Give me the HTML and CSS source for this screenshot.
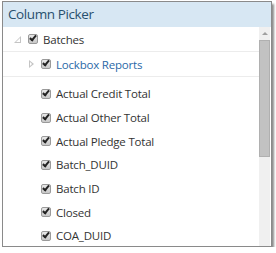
FILE: index.html
```
<!DOCTYPE html>
<html lang="en">
<head>
    <meta charset="UTF-8">
    <title>Column Picker</title>
    <link rel="stylesheet" href="styles.css">
</head>
<body>
    <div class="picker">
        <div class="picker-title">Column Picker</div>
        <div class="picker-body">
            <ul class="tree">
                <li class="node root">
                    <span class="toggle open"></span>
                    <span class="check"></span>
                    <span class="label">Batches</span>
                </li>
                <li class="node group">
                    <span class="toggle closed"></span>
                    <span class="check"></span>
                    <span class="label link">Lockbox Reports</span>
                </li>
                <li class="node leaf"><span class="check"></span><span class="label">Actual Credit Total</span></li>
                <li class="node leaf"><span class="check"></span><span class="label">Actual Other Total</span></li>
                <li class="node leaf"><span class="check"></span><span class="label">Actual Pledge Total</span></li>
                <li class="node leaf"><span class="check"></span><span class="label">Batch_DUID</span></li>
                <li class="node leaf"><span class="check"></span><span class="label">Batch ID</span></li>
                <li class="node leaf"><span class="check"></span><span class="label">Closed</span></li>
                <li class="node leaf"><span class="check"></span><span class="label">COA_DUID</span></li>
            </ul>
            <div class="scrollbar">
                <div class="arrow"></div>
                <div class="thumb"></div>
            </div>
        </div>
    </div>
</body>
</html>
```
FILE: styles.css
```
body {
    margin: 0;
    background: #fff;
    font-family: 'Open Sans', sans-serif;
}

.picker {
    width: 268px;
    height: 244px;
    margin: 1px 0 0 2px;
    border: 1px solid #8a8a8a;
    box-shadow: 2px 3px 2px #8c8c8c;
    display: flex;
    flex-direction: column;
    overflow: hidden;
}

.picker-title {
    height: 25px;
    line-height: 24px;
    padding-left: 5px;
    background-color: #d7e7f3;
    color: #28506e;
    font-size: 13.5px;
    letter-spacing: -0.4px;
}

.picker-body {
    flex: 1;
    display: flex;
    min-height: 0;
}

.tree {
    flex: 1;
    list-style: none;
    margin: 0;
    padding: 0;
}

.node {
    display: flex;
    align-items: center;
    height: 23.7px;
    font-size: 11.5px;
    letter-spacing: -0.2px;
    color: #333;
}

.root {
    height: 24px;
    padding-left: 11px;
    border-bottom: 1px solid #ececec;
}

.group {
    height: 24px;
    padding-left: 26px;
    border-bottom: 1px solid #ececec;
}

.leaf {
    padding-left: 38px;
}

.group + .leaf {
    margin-top: 5px;
}

.toggle {
    width: 0;
    height: 0;
    margin-right: 7px;
    position: relative;
}

.toggle.open {
    border-left: 7px solid transparent;
    border-bottom: 7px solid #c4c4c4;
}

.toggle.open::after {
    content: '';
    position: absolute;
    left: -5px;
    top: 2px;
    border-left: 4px solid transparent;
    border-bottom: 4px solid #fff;
}

.toggle.closed {
    border-top: 4px solid transparent;
    border-bottom: 4px solid transparent;
    border-left: 5px solid #c4c4c4;
}

.toggle.closed::after {
    content: '';
    position: absolute;
    left: -4px;
    top: -2px;
    border-top: 2px solid transparent;
    border-bottom: 2px solid transparent;
    border-left: 2px solid #fff;
}

.check {
    width: 8px;
    height: 8px;
    border: 1px solid #9a9a9a;
    border-radius: 2px;
    background: linear-gradient(#e8e8e8, #c8c8c8);
    margin-right: 5px;
    position: relative;
    flex-shrink: 0;
}

.check::after {
    content: '';
    position: absolute;
    left: 2px;
    top: -1px;
    width: 2px;
    height: 5px;
    border: solid #222;
    border-width: 0 2px 2px 0;
    transform: rotate(40deg);
}

.label.link {
    color: #2b69a8;
}

.scrollbar {
    width: 11px;
    margin-right: 1px;
    background: #f0f0f0;
    display: flex;
    flex-direction: column;
}

.arrow {
    height: 13px;
    position: relative;
}

.arrow::after {
    content: '';
    position: absolute;
    left: 3px;
    top: 5px;
    border-left: 3px solid transparent;
    border-right: 3px solid transparent;
    border-bottom: 3px solid #a0a0a0;
}

.thumb {
    height: 117px;
    background: #c2c2c2;
    border: 1px solid #b0b0b0;
    box-sizing: border-box;
}
```
